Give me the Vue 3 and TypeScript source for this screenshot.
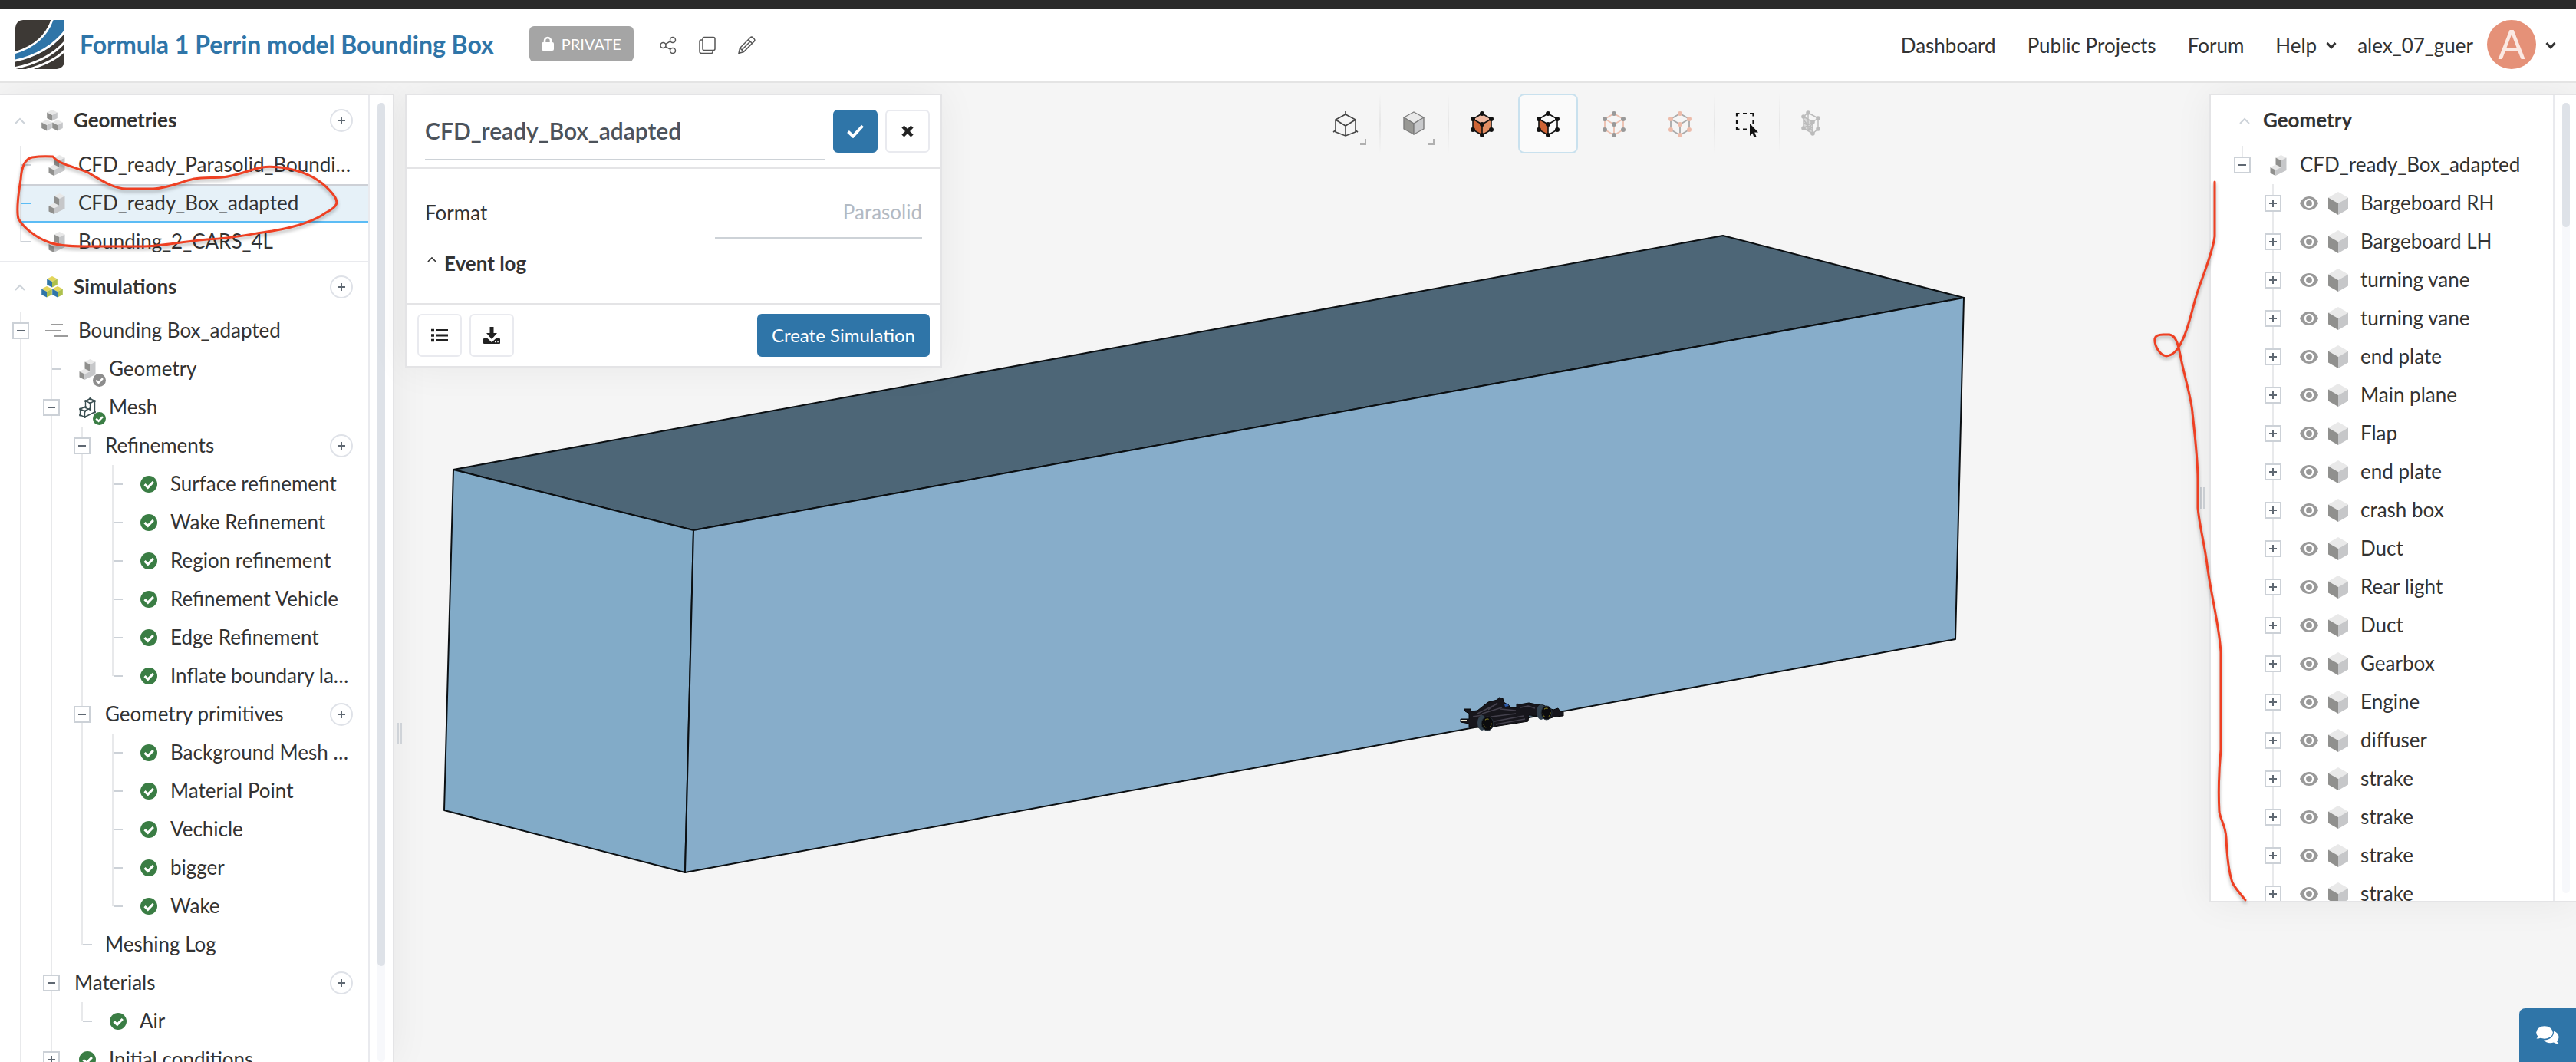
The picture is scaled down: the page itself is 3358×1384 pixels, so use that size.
<script setup lang="ts">
import { ref } from 'vue'

type Guide = 'full' | 'half' | 'none'
type Mark = 'minus' | 'plus' | 'tick'
type Icon = 'part' | 'flow' | 'part-ok' | 'mesh-ok' | 'check'

interface TreeRow {
  label: string
  guides: Guide[]
  mark: Mark
  icon?: Icon
  add?: boolean
  selected?: boolean
}

const f: Guide = 'full'
const h: Guide = 'half'
const n: Guide = 'none'

const title = ref('CFD_ready_Box_adapted')
const format = ref('Parasolid')

const geometries: TreeRow[] = [
  { label: 'CFD_ready_Parasolid_Boundi…', guides: [f], mark: 'tick', icon: 'part' },
  { label: 'CFD_ready_Box_adapted', guides: [f], mark: 'tick', icon: 'part', selected: true },
  { label: 'Bounding_2_CARS_4L', guides: [h], mark: 'tick', icon: 'part' },
]

const check = (label: string, guides: Guide[]): TreeRow => ({ label, guides, mark: 'tick', icon: 'check' })

const simulations: TreeRow[] = [
  { label: 'Bounding Box_adapted', guides: [f], mark: 'minus', icon: 'flow' },
  { label: 'Geometry', guides: [f, f], mark: 'tick', icon: 'part-ok' },
  { label: 'Mesh', guides: [f, f], mark: 'minus', icon: 'mesh-ok' },
  { label: 'Refinements', guides: [f, f, f], mark: 'minus', add: true },
  check('Surface refinement', [f, f, f, f]),
  check('Wake Refinement', [f, f, f, f]),
  check('Region refinement', [f, f, f, f]),
  check('Refinement Vehicle', [f, f, f, f]),
  check('Edge Refinement', [f, f, f, f]),
  check('Inflate boundary la…', [f, f, f, h]),
  { label: 'Geometry primitives', guides: [f, f, f], mark: 'minus', add: true },
  check('Background Mesh …', [f, f, f, f]),
  check('Material Point', [f, f, f, f]),
  check('Vechicle', [f, f, f, f]),
  check('bigger', [f, f, f, f]),
  check('Wake', [f, f, f, h]),
  { label: 'Meshing Log', guides: [f, f, h], mark: 'tick' },
  { label: 'Materials', guides: [f, f], mark: 'minus', add: true },
  check('Air', [f, f, h]),
  { label: 'Initial conditions', guides: [f, f], mark: 'plus', icon: 'check' },
]

const sections = [
  { name: 'Geometries', icon: 'i-cubes-grey', rows: geometries },
  { name: 'Simulations', icon: 'i-cubes-color', rows: simulations },
]

const rootGuide: Guide[] = [h]
const partGuides: Guide[] = [n, f]
const parts: string[] = [
  'Bargeboard RH', 'Bargeboard LH', 'turning vane', 'turning vane', 'end plate', 'Main plane',
  'Flap', 'end plate', 'crash box', 'Duct', 'Rear light', 'Duct', 'Gearbox', 'Engine',
  'diffuser', 'strake', 'strake', 'strake', 'strake',
]

const tools = [
  { id: 't-view', label: 'View orientation', menu: true, divider: true },
  { id: 't-shade', label: 'Render mode', menu: true, divider: true },
  { id: 't-volume', label: 'Select volumes' },
  { id: 't-face', label: 'Select faces', active: true },
  { id: 't-edge', label: 'Select edges' },
  { id: 't-vertex', label: 'Select vertices', divider: true },
  { id: 't-box', label: 'Box selection', narrow: true, divider: true },
  { id: 't-mesh', label: 'Mesh clip', narrow: true },
]
</script>

<template>
  <div class="app">
    <svg class="defs" aria-hidden="true">
      <symbol id="i-cube" viewBox="0 0 26 30">
        <path d="M13 0 26 7.5 13 15 0 7.5z" fill="#e9e9e9" />
        <path d="M0 7.5 13 15v15L0 22.5z" fill="#90908e" />
        <path d="M26 7.5 13 15v15l13-7.5z" fill="#c6c7c9" />
      </symbol>
      <symbol id="i-part" viewBox="0 0 22 27">
        <path d="M14.500 0 21.500 3.500 14.500 7 7.500 3.500zM7.500 12.500 14.500 16 7.200 19.500.5 16z" fill="#e8e8e8" />
        <path d="M7.500 3.500 14.500 7v9L7.500 12.500zM.5 16l6.700 3.500V27L.5 23.500z" fill="#90908e" />
        <path d="M14.500 7l7-3.500V20L7.200 27v-7.500L14.500 16z" fill="#c6c7c9" />
      </symbol>
      <symbol id="i-cubes-grey" viewBox="0 0 28 28">
        <g v-for="p in [[7, 0], [0, 13], [14, 13]]" :key="p.join()" :transform="`translate(${p[0]} ${p[1]})`">
          <path d="M7 0l6.800 3.500L7 7 .2 3.500z" fill="#e8e8e8" />
          <path d="M.2 3.500 7 7v7.500L.2 11z" fill="#90908e" />
          <path d="M13.800 3.500 7 7v7.500l6.800-3.500z" fill="#c6c7c9" />
        </g>
      </symbol>
      <symbol id="i-cubes-color" viewBox="0 0 28 28">
        <g v-for="p in [[7, 0], [0, 13], [14, 13]]" :key="p.join()" :transform="`translate(${p[0]} ${p[1]})`">
          <path d="M7 0l6.800 3.500L7 7 .2 3.500z" fill="#e3d65b" />
          <path d="M.2 3.500 7 7v7.500L.2 11z" fill="#2f75a8" />
          <path d="M13.800 3.500 7 7v7.500l6.800-3.500z" fill="#adc04c" />
        </g>
      </symbol>
      <symbol id="i-mesh" viewBox="0 0 22 27">
        <path d="M14.500 1.500 20.500 4.500 14.500 7.500 8.500 4.500zM8.500 4.500v9L14.500 16V7.500M20.500 4.500V19L7.500 25.500v-8L14.500 14M1.500 15l6-2.500M1.500 15l6 3M1.500 15v8l6 2.500" fill="none" stroke="#3b4f52" stroke-width="1.400" />
        <g fill="#3b4f52">
          <circle cx="14.500" cy="1.600" r="1.600" /><circle cx="20.400" cy="4.500" r="1.600" /><circle cx="14.500" cy="7.500" r="1.600" />
          <circle cx="8.500" cy="4.500" r="1.600" /><circle cx="1.600" cy="15" r="1.600" /><circle cx="7.500" cy="18" r="1.600" />
          <circle cx="1.600" cy="23" r="1.600" /><circle cx="7.500" cy="25.400" r="1.600" /><circle cx="14.500" cy="15" r="1.600" />
          <circle cx="20.400" cy="19" r="1.600" /><circle cx="8.500" cy="12.500" r="1.600" />
        </g>
      </symbol>
      <symbol id="i-check" viewBox="0 0 22 22">
        <circle cx="11" cy="11" r="11" fill="currentColor" />
        <path d="M5.500 11.200 9.800 15.200 16.800 8" fill="none" stroke="#fff" stroke-width="3.200" />
      </symbol>
      <symbol id="i-flow" viewBox="0 0 30 18">
        <path d="M7 1h16M0 9h21M12 16h18" fill="none" stroke="#9b9b9b" stroke-width="2" />
      </symbol>
      <symbol id="i-eye" viewBox="0 0 24 18">
        <path d="M12 0C6 0 2 4 0 9c2 5 6 9 12 9s10-4 12-9C22 4 18 0 12 0z" fill="#999" />
        <circle cx="12" cy="9" r="6.200" fill="#fff" />
        <circle cx="12" cy="9" r="3.900" fill="#999" />
      </symbol>
      <symbol id="i-down" viewBox="0 0 14 10">
        <path d="M1.500 2 7 7.800 12.500 2" fill="none" stroke="#333" stroke-width="3" />
      </symbol>
      <symbol id="i-up" viewBox="0 0 14 9">
        <path d="M1 8 7 2l6 6" fill="none" stroke="currentColor" stroke-width="2" />
      </symbol>
      <symbol id="t-view" viewBox="0 0 36 36">
        <path d="M18 6 31 13v16L18 34 5 29V13zM5 13l13 8 13-8M18 21v13M18 6V2M5 27l-3 2M31 27l3 2" fill="none" stroke="#444" stroke-width="1.600" />
      </symbol>
      <symbol id="t-shade" viewBox="0 0 36 36">
        <g stroke="#7d7d7d" stroke-width="1.400" stroke-linejoin="round">
          <path d="M18 3 31 10 18 18 5 10z" fill="#e9e9e9" /><path d="M5 10l13 8v14L5 25z" fill="#989894" /><path d="M31 10 18 18v14l13-7z" fill="#c9cacc" />
        </g>
      </symbol>
      <symbol id="t-volume" viewBox="0 0 36 36">
        <path d="M18 5 30 12 18 19 6 12z" fill="#eeb7a0" /><path d="M6 12l12 7v14L6 26z" fill="#cf6435" /><path d="M30 12 18 19v14l12-7z" fill="#e18d62" />
        <path d="M18 5 30 12v14L18 33 6 26V12zM6 12l12 7 12-7M18 19v14" fill="none" stroke="#111" stroke-width="1.600" />
        <path d="M18 5h0M30 12h0M30 26h0M18 33h0M6 26h0M6 12h0M18 19h0" stroke="#111" stroke-width="6" stroke-linecap="round" />
      </symbol>
      <symbol id="t-face" viewBox="0 0 36 36">
        <path d="M6 12l12 7v14L6 26z" fill="#cf6435" />
        <path d="M18 5 30 12v14L18 33 6 26V12zM6 12l12 7 12-7M18 19v14" fill="none" stroke="#111" stroke-width="1.600" />
        <path d="M18 5h0M30 12h0M30 26h0M18 33h0M6 26h0M6 12h0M18 19h0" stroke="#111" stroke-width="6" stroke-linecap="round" />
      </symbol>
      <symbol id="t-edge" viewBox="0 0 36 36">
        <path d="M18 5 30 12v14L18 33 6 26V12zM6 12l12 7 12-7M18 19v14" fill="none" stroke="#edbfae" stroke-width="1.800" />
        <path d="M18 5h0M30 12h0M30 26h0M18 33h0M6 26h0M6 12h0M18 19h0" stroke="#999" stroke-width="6" stroke-linecap="round" />
      </symbol>
      <symbol id="t-vertex" viewBox="0 0 36 36">
        <path d="M18 5 30 12v14L18 33 6 26V12zM6 12l12 7 12-7M18 19v14" fill="none" stroke="#a9a9a9" stroke-width="1.800" />
        <path d="M18 5h0M30 12h0M30 26h0M18 33h0M6 26h0M6 12h0M18 19h0" stroke="#edbcab" stroke-width="6" stroke-linecap="round" />
      </symbol>
      <symbol id="t-box" viewBox="0 0 36 36">
        <path d="M5 8.500V5h3.500M13 5h5M22 5h4.500v3.500M5 13v5M26.500 13v5M5 22v3.500h3.500M13 25.500h5" fill="none" stroke="#111" stroke-width="2.200" />
        <path d="M22 18v16l3.500-3.500 2 5.500 3-1-2.300-5.500H33z" fill="#111" />
      </symbol>
      <symbol id="t-mesh" viewBox="0 0 36 36">
        <path d="M7 9 19 16v15L7 24z" fill="#d9d9d9" />
        <path d="M13 4 26 11v14L19 31 7 24V9zM7 9l12 7 7-5M19 16v15M7 17l12 7M7 24 19 16M7 13l12 15M13 4v24M13 28l6-12" fill="none" stroke="#bbb" stroke-width="1.500" />
        <path d="M13 4h0M26 11h0M26 25h0M19 31h0M7 24h0M7 9h0M19 16h0" stroke="#bbb" stroke-width="5.600" stroke-linecap="round" />
      </symbol>
    </svg>

    <header class="topbar">
      <svg class="logo" viewBox="0 0 64 64" role="img" aria-label="Project home">
        <defs><clipPath id="logo-clip"><path d="M10 0h54v54a10 10 0 0 1-10 10H0V10A10 10 0 0 1 10 0z" /></clipPath></defs>
        <g clip-path="url(#logo-clip)">
          <rect width="64" height="64" fill="#3d3935" />
          <path d="M-2 43C24 36 42 20 49-3h17v18C50 36 28 49-2 54z" fill="#2f75a8" />
          <path d="M-2 43C24 36 42 20 49-3M-2 53.500C28 47 50 34 66 13M-2 63C28 57 50 46 66 27M12 66C34 60 54 52 66 38" fill="none" stroke="#fff" stroke-width="3" />
        </g>
      </svg>
      <h1>Formula 1 Perrin model Bounding Box</h1>
      <span class="badge">
        <svg width="16" height="20" viewBox="0 0 16 20"><path d="M4 9V6a4 4 0 0 1 8 0v3" fill="none" stroke="#fff" stroke-width="2.600" /><rect y="8" width="16" height="11" rx="2" fill="#fff" /></svg>
        PRIVATE
      </span>
      <div class="actions">
        <button type="button" aria-label="Share">
          <svg viewBox="0 0 24 24"><g fill="none" stroke="#555" stroke-width="1.500"><circle cx="5.500" cy="12" r="3.500" /><circle cx="18" cy="5" r="3.500" /><circle cx="18" cy="19" r="3.500" /><path d="M8.700 10.400 15 6.700M8.700 13.800 15 17.300" /></g></svg>
        </button>
        <button type="button" aria-label="Copy">
          <svg viewBox="0 0 24 24"><g fill="none" stroke="#555" stroke-width="1.500"><rect x="6" y="1.500" width="16" height="17" rx="2" /><path d="M6 5H4a2 2 0 0 0-2 2v13a2.500 2.500 0 0 0 2.500 2.500H17a2 2 0 0 0 2-2v-2" /></g></svg>
        </button>
        <button type="button" aria-label="Edit">
          <svg viewBox="0 0 24 24"><path d="M2 22.500 3.500 15.500 17 2a2.500 2.500 0 0 1 3.500 0l1.500 1.500a2.500 2.500 0 0 1 0 3.500L8.500 20.500zM3.500 15.500l5 5M14.500 4.500l5 5M17 7 6 18" fill="none" stroke="#555" stroke-width="1.500" /></svg>
        </button>
      </div>
      <nav>
        <a href="#">Dashboard</a>
        <a href="#">Public Projects</a>
        <a href="#">Forum</a>
        <a href="#" class="with-caret">Help <svg width="14" height="10"><use href="#i-down" /></svg></a>
        <a href="#" class="user">alex_07_guer<span class="avatar">A</span><svg width="14" height="10"><use href="#i-down" /></svg></a>
      </nav>
    </header>

    <main class="workspace">
      <svg class="scene" viewBox="0 0 3358 1276" preserveAspectRatio="xMinYMin meet" role="img" aria-label="Bounding box with car">
        <g stroke="#0b0f12" stroke-width="2" stroke-linejoin="round">
          <path d="M591 504 2246 199 2560 280 904 583z" fill="#4d6677" />
          <path d="M591 504 904 583 893 1029 579 948z" fill="#82abc8" />
          <path d="M904 583 2560 280 2549 725 893 1029z" fill="#87adca" />
        </g>
        <g transform="translate(1860 772)">
          <path d="M49 44 57 44 58 47 66 46 80 35 92 32 94 29 99 30 100 35 107 39 108 42 117 42 117 37 121 38 133 36 143 38 152 39 162 44 165 45 171 43 173 46 178 48 178 53 167 54 158 57 143 53 133 52 132 60 113 63 87 67 73 70 67 68 55 68 55 63 44 61 44 57 55 57 55 50 50 47z" fill="#17161c" stroke="#08080a" stroke-width="1" />
          <path d="M66 50 92 37M72 50l26-8M84 54l32-4M88 60l38-7M90 64l38-7M122 42l10-2 9 3M60 54l12-2M80 45l12-9M96 44l20 2" fill="none" stroke="#43404c" stroke-width="1.500" />
          <path d="M101 38l3-2 3 4-5 1z" fill="#2c5aa8" />
          <path d="M45 59h7" stroke="#ece8d2" stroke-width="2" />
          <ellipse cx="72" cy="62" rx="6" ry="10" fill="#33424f" />
          <ellipse cx="79" cy="63" rx="8" ry="9" fill="#0b0b0e" stroke="#26313b" />
          <ellipse cx="79" cy="63" rx="5" ry="6" fill="none" stroke="#a39b26" stroke-dasharray="5 6" />
          <ellipse cx="149" cy="48" rx="6" ry="10" fill="#33424f" />
          <ellipse cx="156" cy="49" rx="7" ry="9" fill="#0b0b0e" stroke="#26313b" />
          <ellipse cx="156" cy="49" rx="5" ry="6" fill="none" stroke="#a39b26" stroke-dasharray="5 6" />
        </g>
      </svg>

      <aside class="sidebar">
        <div class="side-content">
          <section v-for="s in sections" :key="s.name">
            <header class="section-head">
              <svg class="fold" width="14" height="9"><use href="#i-up" /></svg>
              <svg width="28" height="28"><use :href="'#' + s.icon" /></svg>
              <h2>{{ s.name }}</h2>
              <button class="add" type="button" :aria-label="'Add to ' + s.name"></button>
            </header>
            <ul class="tree">
              <li v-for="(r, i) in s.rows" :key="i" :class="{ selected: r.selected }">
                <span v-for="(g, k) in r.guides" :key="k" :class="['guide', g, { own: k === r.guides.length - 1 }]">
                  <template v-if="k === r.guides.length - 1">
                    <i v-if="r.mark === 'tick'" class="tick"></i>
                    <button v-else type="button" :class="['toggle', r.mark]" :aria-label="'Toggle ' + r.label"></button>
                  </template>
                </span>
                <span v-if="r.icon" class="slot">
                  <svg v-if="r.icon === 'check'" class="ok" width="22" height="22"><use href="#i-check" /></svg>
                  <svg v-else-if="r.icon === 'flow'" class="wide" width="30" height="18"><use href="#i-flow" /></svg>
                  <svg v-else width="22" height="27"><use :href="r.icon === 'mesh-ok' ? '#i-mesh' : '#i-part'" /></svg>
                  <svg v-if="r.icon.endsWith('-ok')" :class="['status', r.icon === 'mesh-ok' ? 'ok' : 'muted']" width="17" height="17"><use href="#i-check" /></svg>
                </span>
                <span class="label">{{ r.label }}</span>
                <button v-if="r.add" class="add" type="button" :aria-label="'Add to ' + r.label"></button>
              </li>
            </ul>
          </section>
        </div>
        <div class="scroll"><div class="thumb"></div></div>
        <svg class="mark-left" width="460" height="140" viewBox="0 0 460 140">
          <path d="M69 12C55 11 48 12 42 13 32 15 28 26 27 42 24 60 21 82 24 93 30 104 46 117 62 123 74 128 90 129 110 129H185C210 129 235 123 270 120 310 118 325 113 355 109 385 104 410 96 425 85 441 77 442 71 434 61 422 46 404 35 385 30 372 26 352 24 342 26 325 29 310 37 290 39 276 40 265 39 253 41 235 45 220 53 200 54H165C148 54 132 43 115 33 100 26 76 22 69 12" fill="none" stroke="#ee4023" stroke-width="3" stroke-linecap="round" stroke-linejoin="round" />
        </svg>
      </aside>
      <div class="grip"></div>

      <form class="card" @submit.prevent>
        <div class="card-head">
          <input v-model="title" class="title-input" aria-label="Geometry name" />
          <button class="btn primary" type="submit" aria-label="Apply">
            <svg width="22" height="18" viewBox="0 0 22 18"><path d="M1.500 9.500 8 15.500 20.500 2" fill="none" stroke="#fff" stroke-width="4" /></svg>
          </button>
          <button class="btn" type="button" aria-label="Close">
            <svg width="16" height="16" viewBox="0 0 16 16"><path d="M2 2l12 12M14 2 2 14" stroke="#222" stroke-width="4.500" /></svg>
          </button>
        </div>
        <div class="card-body">
          <div class="field">
            <label for="format">Format</label>
            <input id="format" v-model="format" readonly />
          </div>
          <button type="button" class="event-log">
            <svg width="12" height="8" viewBox="0 0 14 9"><use href="#i-up" /></svg>Event log
          </button>
        </div>
        <div class="card-foot">
          <button class="btn" type="button" aria-label="Log list">
            <svg width="22" height="18" viewBox="0 0 22 18"><path d="M6 2.500h16M6 9h16M6 15.500h16" stroke="#222" stroke-width="3" /><path d="M0 2.500h4M0 9h4M0 15.500h4" stroke="#222" stroke-width="3.500" /></svg>
          </button>
          <button class="btn" type="button" aria-label="Download">
            <svg width="22" height="22" viewBox="0 0 22 22"><path d="M8.500 0h5v8H18l-7 8-7-8h4.500z" fill="#222" /><path d="M1 15h4.500L11 20l5.500-5H21a1 1 0 0 1 1 1v5a1 1 0 0 1-1 1H1a1 1 0 0 1-1-1v-5a1 1 0 0 1 1-1z" fill="#222" /><path d="M15 19.500h1.500M18.300 19.500h1.500" stroke="#fff" stroke-width="1.500" /></svg>
          </button>
          <button class="btn primary create" type="button">Create Simulation</button>
        </div>
      </form>

      <div class="toolbar" role="toolbar">
        <template v-for="t in tools" :key="t.id">
          <button type="button" :class="['tool', { active: t.active, narrow: t.narrow, menu: t.menu }]" :aria-label="t.label">
            <svg width="36" height="36"><use :href="'#' + t.id" /></svg>
          </button>
          <i v-if="t.divider" class="divider"></i>
        </template>
      </div>

      <div class="grip right"></div>
      <aside class="parts">
        <div class="parts-content">
          <header class="section-head">
            <svg class="fold" width="14" height="9"><use href="#i-up" /></svg>
            <h2>Geometry</h2>
          </header>
          <ul class="tree">
            <li>
              <span v-for="g in rootGuide" :key="g" :class="['guide own', g]"><button type="button" class="toggle minus" aria-label="Collapse geometry"></button></span>
              <span class="slot"><svg width="22" height="27"><use href="#i-part" /></svg></span>
              <span class="label">CFD_ready_Box_adapted</span>
            </li>
            <li v-for="(p, i) in parts" :key="i">
              <span v-for="(g, k) in partGuides" :key="k" :class="['guide', g, { own: k === 1 }]">
                <button v-if="k === 1" type="button" class="toggle plus" :aria-label="'Expand ' + p"></button>
              </span>
              <span class="part-icons">
                <svg width="24" height="18"><use href="#i-eye" /></svg>
                <svg width="26" height="30"><use href="#i-cube" /></svg>
              </span>
              <span class="label">{{ p }}</span>
            </li>
          </ul>
        </div>
        <div class="scroll"><div class="thumb short"></div></div>
      </aside>

      <svg class="mark-right" width="140" height="950" viewBox="2798 230 140 950">
        <path d="M2887 237V308C2885 325 2877 345 2870 365 2858 395 2855 425 2844 445 2840 454 2834 463 2824 464 2815 463 2808 450 2809 441 2810 437 2815 436 2820 436H2828C2837 437 2840 452 2842 462 2846 485 2857 520 2858 538 2861 565 2865 600 2865 625V662C2867 685 2874 710 2877 735 2882 775 2893 815 2895 850V977C2892 1010 2892 1040 2893 1058 2895 1070 2901 1075 2902 1092 2903 1115 2905 1135 2910 1150 2915 1160 2922 1166 2927 1173" fill="none" stroke="#ee4023" stroke-width="3" stroke-linecap="round" stroke-linejoin="round" />
      </svg>

      <button class="chat" type="button" aria-label="Chat">
        <svg width="30" height="24" viewBox="0 0 30 24">
          <path d="M23 7c4 1 6.500 4 6.500 7.500 0 2.500-1.200 4-2.500 5.200.5 1.500 1.500 2.500 2.500 3.300-2.500.2-5-.5-6.500-1.600C18 23 12.500 22 10 18.500 17.500 18.500 23.500 14 23 7z" fill="#fff" />
          <ellipse cx="11" cy="8.500" rx="10.800" ry="8.200" fill="#fff" />
          <path d="M3.500 11C3 13.500 2 15 .5 16.500 3.500 16.600 6 16 8 14.500z" fill="#fff" />
        </svg>
      </button>
    </main>
  </div>
</template>

<style>
html, body { margin: 0; overflow: hidden; }
</style>

<style scoped>
.app {
  display: flex; flex-direction: column; height: 100vh; box-sizing: border-box;
  border-top: 12px solid #2b2b2b; background: #f5f5f5; color: #333;
  font: 26px/32px Lato, "Liberation Sans", sans-serif;
}
.defs { position: absolute; width: 0; height: 0; }
svg { display: block; flex: none; }
button { padding: 0; border: 0; background: none; font: inherit; color: inherit; }
h1, h2, ul { margin: 0; padding: 0; list-style: none; }
a { color: inherit; text-decoration: none; }

.topbar {
  display: flex; align-items: center; flex: none; height: 94px; padding: 0 26px 0 20px;
  background: #fff; border-bottom: 2px solid #e4e4e4; white-space: nowrap;
}
.logo { width: 64px; height: 64px; margin-bottom: 2px; }
h1 { margin-left: 20px; padding-bottom: 2px; font-size: 32px; line-height: 40px; font-weight: 700; color: #2f75a8; }
.badge {
  display: flex; align-items: center; gap: 10px; height: 46px; box-sizing: border-box;
  margin: 0 0 4px 46px; padding: 0 16px; border-radius: 6px; background: #a5a5a5; color: #fff; font-size: 20px;
}
.actions { display: flex; gap: 27px; margin-left: 33px; }
.actions svg { width: 24px; height: 24px; }
nav { display: flex; align-items: center; margin-left: auto; gap: 41px; }
.with-caret { display: flex; align-items: center; gap: 12px; }
.user { display: flex; align-items: center; margin-left: -14px; }
.avatar {
  width: 64px; height: 64px; margin: 0 12px 2px 18px; border-radius: 50%; background: #e59178; color: #fbe9e3;
  font-size: 52px; line-height: 62px; text-align: center;
}

.workspace { position: relative; display: flex; flex: 1; align-items: flex-start; min-height: 0; overflow: hidden; }
.scene { position: absolute; left: 0; top: 0; width: 100%; }

.sidebar, .card, .parts {
  position: relative; flex: none; box-sizing: border-box; margin-top: 14px;
  border: 2px solid #e4e4e6; background: #fff; box-shadow: 0 0 48px rgba(0, 0, 0, 0.06);
}
.sidebar { display: flex; align-self: stretch; width: 514px; border-left: 0; border-bottom: 0; }
.side-content { width: 480px; flex: none; border-right: 2px solid #e9eaee; overflow: hidden; }
section + section { border-top: 2px solid #e9eaee; }
.section-head { display: flex; align-items: center; height: 66px; padding: 0 20px 0 19px; }
section + section .section-head { height: 64px; }
h2 { font-size: 26px; line-height: 32px; font-weight: 700; margin-left: 14px; padding-bottom: 2px; }
.fold { margin-right: 21px; color: #cdd3d9; }

.tree li { display: flex; align-items: center; box-sizing: border-box; height: 50px; margin-left: 26px; padding-right: 20px; white-space: nowrap; }
.tree li.selected { background: #e6f1f8; box-shadow: inset 0 2px #cdd0d6, inset 0 -2px #5bbcf5; }
.tree li.selected .tick { background: #5bbcf5; }
.label { padding-bottom: 2px; }
.guide {
  display: flex; align-items: center; flex: none; align-self: stretch; width: 40px;
  background: linear-gradient(#e8e9eb, #e8e9eb) 0 0 / 2px 100% no-repeat;
}
.guide.own { width: 31px; }
.guide.half { background-size: 2px 50%; }
.guide.none { background: none; }
.tick { width: 12px; height: 2px; margin-left: 2px; background: #ccd1d7; }
.toggle {
  width: 22px; height: 22px; margin-left: -10px; border: 2px solid #ccd1d7;
  background: linear-gradient(#5f6872, #5f6872) center / 10px 2px no-repeat, #fff;
}
.toggle.plus {
  background: linear-gradient(#5f6872, #5f6872) center / 10px 2px no-repeat,
    linear-gradient(#5f6872, #5f6872) center / 2px 10px no-repeat, #fff;
}
.slot { position: relative; display: flex; justify-content: center; width: 22px; margin: 0 17px 0 6px; }
.ok { color: #3a7d44; }
.wide { margin: 0 -4px; }
.muted { color: #8d8d8d; }
.status { position: absolute; left: 18px; top: 19px; }
.add {
  width: 30px; height: 30px; flex: none; margin-left: auto; border: 2px solid #dfe2e8; border-radius: 50%;
  background: linear-gradient(#5f6872, #5f6872) center / 10px 2px no-repeat,
    linear-gradient(#5f6872, #5f6872) center / 2px 10px no-repeat, #fff;
}
.scroll { flex: none; width: 10px; margin: 10px; border-radius: 5px; background: #f7f8fb; }
.sidebar .scroll { margin-bottom: 0; }
.thumb { height: 90%; border-radius: 5px; background: #dee2e8; }
.thumb.short { height: 162px; }

.grip {
  flex: none; width: 2px; height: 28px; margin: 0 0 0 4px; align-self: center;
  border: solid #cfd3d8; border-width: 0 2px; position: relative; top: 210px;
}

.card { width: 700px; margin-left: 4px; }
.card-head { display: flex; align-items: center; gap: 10px; height: 94px; padding: 0 14px 0 24px; border-bottom: 2px solid #e4e4e6; }
input { min-width: 0; padding: 0; border: 0; border-bottom: 2px solid #cdd2d7; background: none; outline: 0; font: inherit; }
.title-input { flex: 1; height: 62px; margin-top: 14px; padding-bottom: 14px; box-sizing: border-box; font-size: 30px; font-weight: 600; color: #4c535b; }
.btn {
  display: flex; align-items: center; justify-content: center; flex: none; box-sizing: border-box;
  width: 58px; height: 56px; border: 2px solid #e9eaef; border-radius: 6px; background: #fff;
}
.btn.primary { border-color: #2f75a8; background: #2f75a8; color: #fff; }
.card-body { height: 177px; box-sizing: border-box; padding: 31px 24px 0; border-bottom: 2px solid #e4e4e6; }
.field { display: flex; justify-content: space-between; align-items: flex-start; line-height: 52px; }
.field input { width: 270px; height: 60px; padding-bottom: 8px; box-sizing: border-box; text-align: right; color: #b3bac3; }
.event-log { display: flex; align-items: center; gap: 10px; margin-top: 16px; padding-left: 3px; font-weight: 700; }
.event-log svg { margin-bottom: 10px; }
.card-foot { display: flex; align-items: center; gap: 10px; height: 80px; padding: 0 14px; }
.create { width: auto; margin-left: auto; padding: 0 17px; font-size: 24px; }

.toolbar { position: relative; display: flex; flex: 1; justify-content: center; margin-top: 14px; padding-left: 18px; }
.tool { position: relative; display: flex; align-items: center; justify-content: center; box-sizing: border-box; width: 78px; height: 78px; margin: 0 4px; border: 2px solid transparent; border-radius: 8px; }
.tool.narrow { width: 74px; }
.tool.active { border-color: #c9e1ee; background: #fafafa; }
.tool.menu::after { content: ""; position: absolute; right: 10px; bottom: 9px; width: 6px; height: 6px; border: solid #b0b0b0; border-width: 0 2px 2px 0; }
.divider { width: 2px; margin-left: 1px; background: linear-gradient(transparent, #e6e6e6, transparent); }

.grip.right { top: -97px; margin: 0 6px 0 0; }
.parts { display: flex; width: 478px; height: calc(100% - 222px); border-right: 0; }
.parts-content { width: 446px; flex: none; border-right: 2px solid #e9eaee; overflow: hidden; }
.parts .section-head { padding-left: 37px; }
.parts .section-head h2 { margin-left: -4px; }
.parts .tree li { margin-left: 40px; }
.part-icons { display: flex; align-items: center; gap: 13px; margin: 0 16px 0 5px; }

.mark-left, .mark-right { position: absolute; pointer-events: none; filter: drop-shadow(0 3px 2px rgba(0, 0, 0, 0.3)); }
.mark-left { left: 0; top: 68px; }
.mark-right { right: 420px; top: 122px; }

.chat {
  position: absolute; right: 0; bottom: 0; display: flex; align-items: center; justify-content: center;
  width: 74px; height: 70px; border-radius: 8px 0 0 0; background: #2f75a8;
}
</style>
